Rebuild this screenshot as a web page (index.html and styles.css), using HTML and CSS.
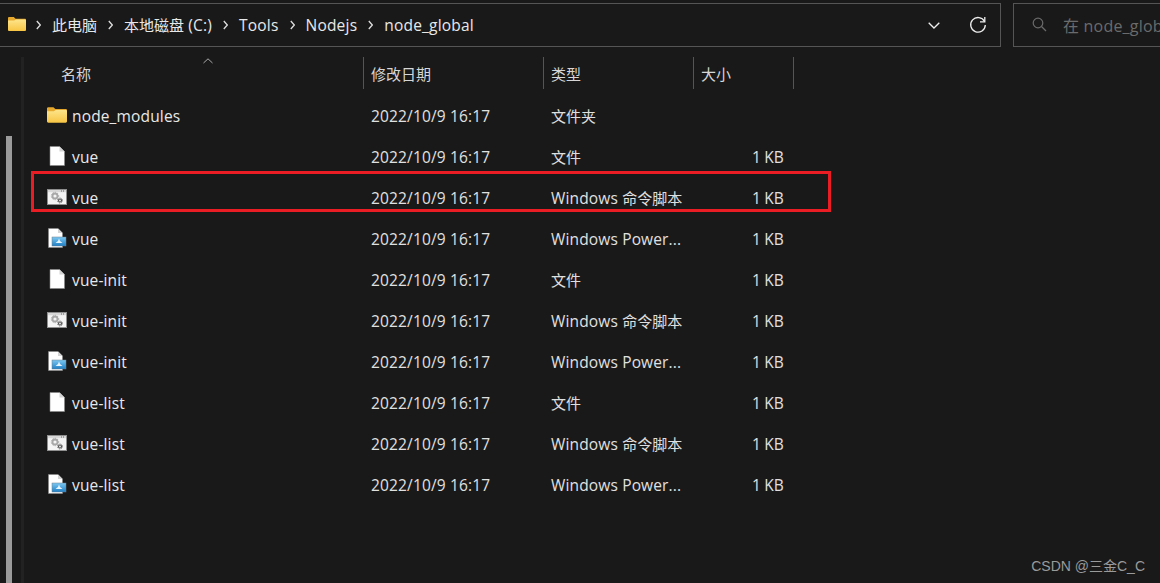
FILE: index.html
```html
<!DOCTYPE html>
<html lang="zh">
<head>
<meta charset="utf-8">
<title>node_global</title>
<link rel="stylesheet" href="styles.css">
</head>
<body>
<svg class="defs" width="0" height="0" aria-hidden="true">
  <defs>
    <linearGradient id="folderFront" x1="0" y1="0" x2="0" y2="1"><stop offset="0" stop-color="#fde48a"/><stop offset="1" stop-color="#f7c544"/></linearGradient>
    <linearGradient id="ps" x1="0" y1="0" x2="0" y2="1"><stop offset="0" stop-color="#7cc8f2"/><stop offset="1" stop-color="#1f7fc4"/></linearGradient>
    <symbol id="i-folder" viewBox="0 0 18 16">
      <path d="M0 2.200C0 1.500.5 1 1.200 1h4.600l1.700 1.700h9.300c.7 0 1.200.5 1.200 1.200V6H0z" fill="#e6a92e"/>
      <path d="M0 4.600h6.200l1.600-1h9c.7 0 1.200.5 1.200 1.200v8.900c0 .7-.5 1.300-1.200 1.300H1.200C.5 15 0 14.400 0 13.700z" fill="url(#folderFront)"/>
    </symbol>
    <symbol id="i-file" viewBox="0 0 18 20">
      <path d="M2 .5h9.500L16.500 5.500V19.500H2z" fill="#fff" stroke="#8a8a8a" stroke-width=".6"/>
      <path d="M11.500.5V5.500H16.500z" fill="#d4d4d4"/>
    </symbol>
    <symbol id="i-cmd" viewBox="0 0 20 16">
      <rect x=".5" y=".5" width="19" height="15" fill="#f4f4f4" stroke="#8f8f8f"/>
      <rect x="1" y="1" width="18" height="2.200" fill="#d8d8d8"/>
      <rect x="14" y="1.500" width="1" height="1" fill="#666"/><rect x="16" y="1.500" width="1" height="1" fill="#666"/>
      <circle cx="8" cy="7" r="2.500" fill="none" stroke="#a8a8a8" stroke-width="1.800"/>
      <circle cx="8" cy="7" r="3.700" fill="none" stroke="#a8a8a8" stroke-width="1" stroke-dasharray="1.200 1.200"/>
      <circle cx="13" cy="11.500" r="1.500" fill="none" stroke="#555" stroke-width="1.200"/>
      <circle cx="13" cy="11.500" r="2.500" fill="none" stroke="#555" stroke-width=".8" stroke-dasharray="1 1"/>
    </symbol>
    <symbol id="i-ps" viewBox="0 0 20 20">
      <path d="M1.500.5h9.500l4.500 4.500V19.500H1.500z" fill="#fff" stroke="#8a8a8a" stroke-width=".6"/>
      <path d="M11 .5V5h4.500z" fill="#d4d4d4"/>
      <rect x="5" y="9" width="14" height="9" fill="url(#ps)" stroke="#6d7f8e" stroke-width=".5"/>
      <path d="M12 10.500l1 2.500 2.500 2h-7l2.500-2z" fill="#eaf6ff"/>
    </symbol>
  </defs>
</svg>

<div class="window">
  <header class="toolbar">
    <div class="address">
      <svg class="addr-folder"><use href="#i-folder"/></svg>
      <nav class="crumbs">
        <svg class="sep" viewBox="0 0 5 10"><path d="M.8 1l3.500 4-3.500 4"/></svg><span class="c">此电脑</span>
        <svg class="sep" viewBox="0 0 5 10"><path d="M.8 1l3.500 4-3.500 4"/></svg><span><span class="c">本地磁盘</span> (C:)</span>
        <svg class="sep" viewBox="0 0 5 10"><path d="M.8 1l3.500 4-3.500 4"/></svg><span>Tools</span>
        <svg class="sep" viewBox="0 0 5 10"><path d="M.8 1l3.500 4-3.500 4"/></svg><span>Nodejs</span>
        <svg class="sep" viewBox="0 0 5 10"><path d="M.8 1l3.500 4-3.500 4"/></svg><span>node_global</span>
      </nav>
      <svg class="chevron" viewBox="0 0 12 7"><path d="M.7.7L6 6l5.300-5.300"/></svg>
      <svg class="refresh" viewBox="0 0 18 18"><path d="M15.500 5.500A7.300 7.300 0 1 0 16.300 9"/><path d="M15.800 1v4.800H11"/></svg>
    </div>
    <div class="search">
      <svg class="search-icon" viewBox="0 0 15 15"><circle cx="6" cy="6" r="4.800"/><path d="M9.500 9.500L14 14"/></svg>
      <span class="search-text">在 node_global 中搜索</span>
    </div>
  </header>

  <div class="body">
    <div class="scroll"><div class="thumb"></div></div>
    <div class="list">
      <div class="head">
        <div class="hcell name-h">名称<svg class="sort" viewBox="0 0 10 6"><path d="M.5 5L5 .8 9.500 5"/></svg></div>
        <div class="hcell">修改日期</div>
        <div class="hcell">类型</div>
        <div class="hcell">大小</div>
      </div>
      <div class="rows">
        <div class="row"><div class="name"><svg class="ic"><use href="#i-folder"/></svg>node_modules</div><div>2022/10/9 16:17</div><div class="c">文件夹</div><div class="size"></div></div>
        <div class="row"><div class="name"><svg class="ic"><use href="#i-file"/></svg>vue</div><div>2022/10/9 16:17</div><div class="c">文件</div><div class="size">1 KB</div></div>
        <div class="row"><div class="name"><svg class="ic"><use href="#i-cmd"/></svg>vue</div><div>2022/10/9 16:17</div><div>Windows <span class="c">命令脚本</span></div><div class="size">1 KB</div></div>
        <div class="row"><div class="name"><svg class="ic"><use href="#i-ps"/></svg>vue</div><div>2022/10/9 16:17</div><div>Windows Power...</div><div class="size">1 KB</div></div>
        <div class="row"><div class="name"><svg class="ic"><use href="#i-file"/></svg>vue-init</div><div>2022/10/9 16:17</div><div class="c">文件</div><div class="size">1 KB</div></div>
        <div class="row"><div class="name"><svg class="ic"><use href="#i-cmd"/></svg>vue-init</div><div>2022/10/9 16:17</div><div>Windows <span class="c">命令脚本</span></div><div class="size">1 KB</div></div>
        <div class="row"><div class="name"><svg class="ic"><use href="#i-ps"/></svg>vue-init</div><div>2022/10/9 16:17</div><div>Windows Power...</div><div class="size">1 KB</div></div>
        <div class="row"><div class="name"><svg class="ic"><use href="#i-file"/></svg>vue-list</div><div>2022/10/9 16:17</div><div class="c">文件</div><div class="size">1 KB</div></div>
        <div class="row"><div class="name"><svg class="ic"><use href="#i-cmd"/></svg>vue-list</div><div>2022/10/9 16:17</div><div>Windows <span class="c">命令脚本</span></div><div class="size">1 KB</div></div>
        <div class="row"><div class="name"><svg class="ic"><use href="#i-ps"/></svg>vue-list</div><div>2022/10/9 16:17</div><div>Windows Power...</div><div class="size">1 KB</div></div>
      </div>
    </div>
  </div>
  <div class="mark"></div>
  <div class="watermark">CSDN @三金C_C</div>
</div>
</body>
</html>
```
FILE: styles.css
```css
* { box-sizing: border-box; }
html, body { margin: 0; padding: 0; }
body {
  width: 1160px;
  height: 583px;
  overflow: hidden;
  background: #191919;
  color: #e6e6e6;
  font-family: "Open Sans", "Noto Sans CJK SC", "Noto Sans", sans-serif;
  font-size: 15.500px;
  letter-spacing: .15px;
}
.c { font-size: 15px; letter-spacing: 0; }
.defs { position: absolute; }
.window { position: relative; width: 1160px; height: 583px; overflow: hidden; }

.toolbar { display: flex; gap: 12px; padding-top: 3px; height: 57px; margin-left: -1px; }
.address {
  display: flex;
  align-items: center;
  flex: none;
  width: 1002px;
  height: 44px;
  border: 1px solid #555;
  border-left: 0;
  padding-left: 9px;
}
.addr-folder { width: 18px; height: 16px; flex: none; margin: -2px -1px 0 0; }
.crumbs { display: flex; align-items: center; flex: 1; white-space: nowrap; margin-top: -1px; letter-spacing: .2px; }
.sep { width: 5px; height: 10px; flex: none; margin: 0 11px; }
.sep path { fill: none; stroke: #ddd; stroke-width: 1.300; }
.crumbs span { color: #e8e8e8; }
.chevron { width: 12px; height: 7px; margin-right: 29px; flex: none; }
.chevron path { fill: none; stroke: #eee; stroke-width: 1.300; }
.refresh { width: 18px; height: 18px; margin-right: 13px; flex: none; }
.refresh path { fill: none; stroke: #eee; stroke-width: 1.300; }

.search {
  display: flex;
  align-items: center;
  flex: none;
  width: 300px;
  height: 44px;
  border: 1px solid #555;
  padding-left: 18px;
  white-space: nowrap;
  overflow: hidden;
}
.search-icon { width: 15px; height: 15px; flex: none; margin: -2px 16px 0 0; }
.search-icon circle, .search-icon path { fill: none; stroke: #6a6a6a; stroke-width: 1.200; }
.search-text { color: #6b6b6b; font-size: 16px; letter-spacing: .2px; }

.body { display: flex; height: 526px; }
.scroll {
  flex: none;
  width: 24px;
  height: 526px;
  padding: 79px 0 0 6px;
  border-right: 3px solid #222;
}
.thumb { width: 6px; height: 447px; background: #9b9b9b; }

.list { flex: 1; padding-left: 20px; }
.head { display: grid; grid-template-columns: 320px 180px 150px 100px; height: 33px; }
.hcell {
  position: relative;
  display: flex;
  align-items: center;
  height: 32px;
  padding-left: 7px;
  border-right: 1px solid #555;
  color: #d6d6d6;
  font-size: 15px;
  letter-spacing: 0;
}
.name-h { padding-left: 17px; }
.sort { position: absolute; left: 159px; top: 1px; width: 10px; height: 6px; }
.sort path { fill: none; stroke: #aaa; stroke-width: 1; }

.rows { padding-top: 5px; }
.row {
  display: grid;
  grid-template-columns: 320px 180px 142px 100px;
  align-items: center;
  height: 41px;
  color: #e0e0e0;
}
.row > div:not(.name):not(.size) { padding-left: 7px; }
.name { display: flex; align-items: center; padding-left: 3px; color: #e8e8e8; }
.ic { width: 20px; height: 20px; flex: none; margin: -2px 5px 0 0; }
.size { text-align: right; padding-right: 2px; word-spacing: -1px; }

.mark {
  position: absolute;
  left: 31px;
  top: 171px;
  width: 800px;
  height: 41px;
  border: 3px solid #ea1c24;
}
.watermark {
  position: absolute;
  right: 15px;
  bottom: 8px;
  font-family: "Liberation Sans", "Noto Sans CJK SC", sans-serif;
  font-size: 14px;
  letter-spacing: 0;
  color: #9a9a9a;
}
```
